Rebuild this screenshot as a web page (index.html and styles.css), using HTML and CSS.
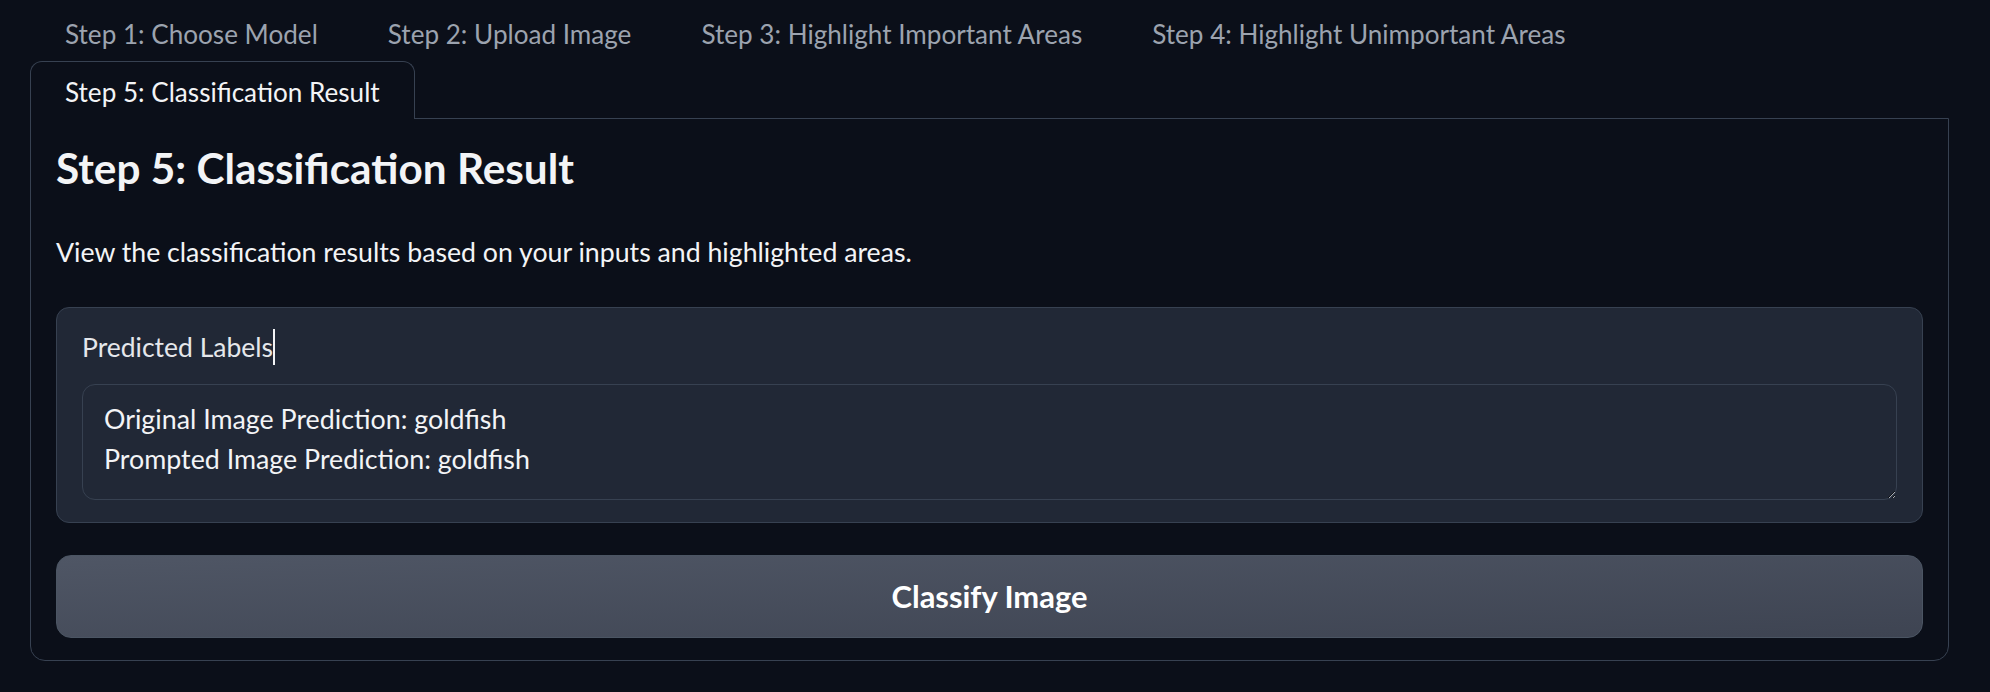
FILE: index.html
```html
<!DOCTYPE html>
<html lang="en">
<head>
<meta charset="utf-8">
<title>Step 5: Classification Result</title>
<link rel="stylesheet" href="styles.css">
</head>
<body>
<div class="app">
  <div class="tab-nav">
    <button class="tab">Step 1: Choose Model</button>
    <button class="tab">Step 2: Upload Image</button>
    <button class="tab">Step 3: Highlight Important Areas</button>
    <button class="tab">Step 4: Highlight Unimportant Areas</button>
    <div class="tab-break"></div>
    <button class="tab selected">Step 5: Classification Result</button>
  </div>
  <div class="panel">
    <h2 class="heading">Step 5: Classification Result</h2>
    <p class="desc">View the classification results based on your inputs and highlighted areas.</p>
    <div class="block">
      <div class="label">Predicted Labels<span class="caret"></span></div>
      <textarea class="output" rows="2" readonly>Original Image Prediction: goldfish
Prompted Image Prediction: goldfish</textarea>
    </div>
    <button class="btn">Classify Image</button>
  </div>
</div>
</body>
</html>
```
FILE: styles.css
```css
html, body {
  margin: 0;
  padding: 0;
  background: #0b0f19;
}
body {
  font-family: "Lato", "Liberation Sans", sans-serif;
  color: #f3f4f6;
}
.app {
  margin-left: 30px;
  width: 1919px;
  padding-top: 3px;
}
.tab-nav {
  display: flex;
  flex-wrap: wrap;
}
.tab-break {
  flex-basis: 100%;
  height: 0;
}
.tab {
  box-sizing: border-box;
  height: 58px;
  padding: 2px 34px 0 34px;
  margin: 0;
  background: transparent;
  border: 1px solid transparent;
  border-bottom: 0;
  border-radius: 12px 12px 0 0;
  font-family: inherit;
  font-size: 26.1px;
  color: #9ca3af;
  cursor: pointer;
}
.tab.selected {
  color: #f3f4f6;
  background: #0b0f19;
  border-color: #374151;
  margin-bottom: -1px;
  position: relative;
  z-index: 1;
}
.panel {
  box-sizing: border-box;
  border: 1px solid #374151;
  border-radius: 0 0 15px 15px;
  padding: 0 25px 21px 25px;
  height: 543px;
}
.heading {
  margin: 24px 0 0 0;
  font-size: 42.3px;
  line-height: 50px;
  font-weight: 700;
  color: #f3f4f6;
}
.desc {
  margin: 39px 0 0 0;
  font-size: 26.7px;
  line-height: 40px;
  color: #f3f4f6;
}
.block {
  box-sizing: border-box;
  margin-top: 35px;
  height: 216px;
  background: #212836;
  border: 1px solid #374151;
  border-radius: 13px;
  padding: 21px 25px 21px 25px;
}
.label {
  font-size: 26.5px;
  line-height: 36px;
  color: #e5e7eb;
  display: flex;
  align-items: center;
}
.caret {
  display: inline-block;
  width: 2px;
  height: 36px;
  background: #f3f4f6;
}
.output {
  display: block;
  box-sizing: border-box;
  margin-top: 19px;
  width: 100%;
  height: 116px;
  background: #212836;
  border: 1px solid #374151;
  border-radius: 13px;
  padding: 14px 20px 14px 21px;
  font-family: inherit;
  font-size: 26.8px;
  line-height: 40px;
  color: #f3f4f6;
  color-scheme: dark;
  resize: vertical;
  outline: none;
}
.btn {
  display: block;
  box-sizing: border-box;
  margin-top: 32px;
  width: 100%;
  height: 83px;
  border: 1px solid #4b5563;
  border-radius: 15px;
  background: linear-gradient(to bottom right, #4f5665, #3e4452);
  font-family: inherit;
  font-size: 30.9px;
  font-weight: 700;
  color: #ffffff;
  cursor: pointer;
}
```
